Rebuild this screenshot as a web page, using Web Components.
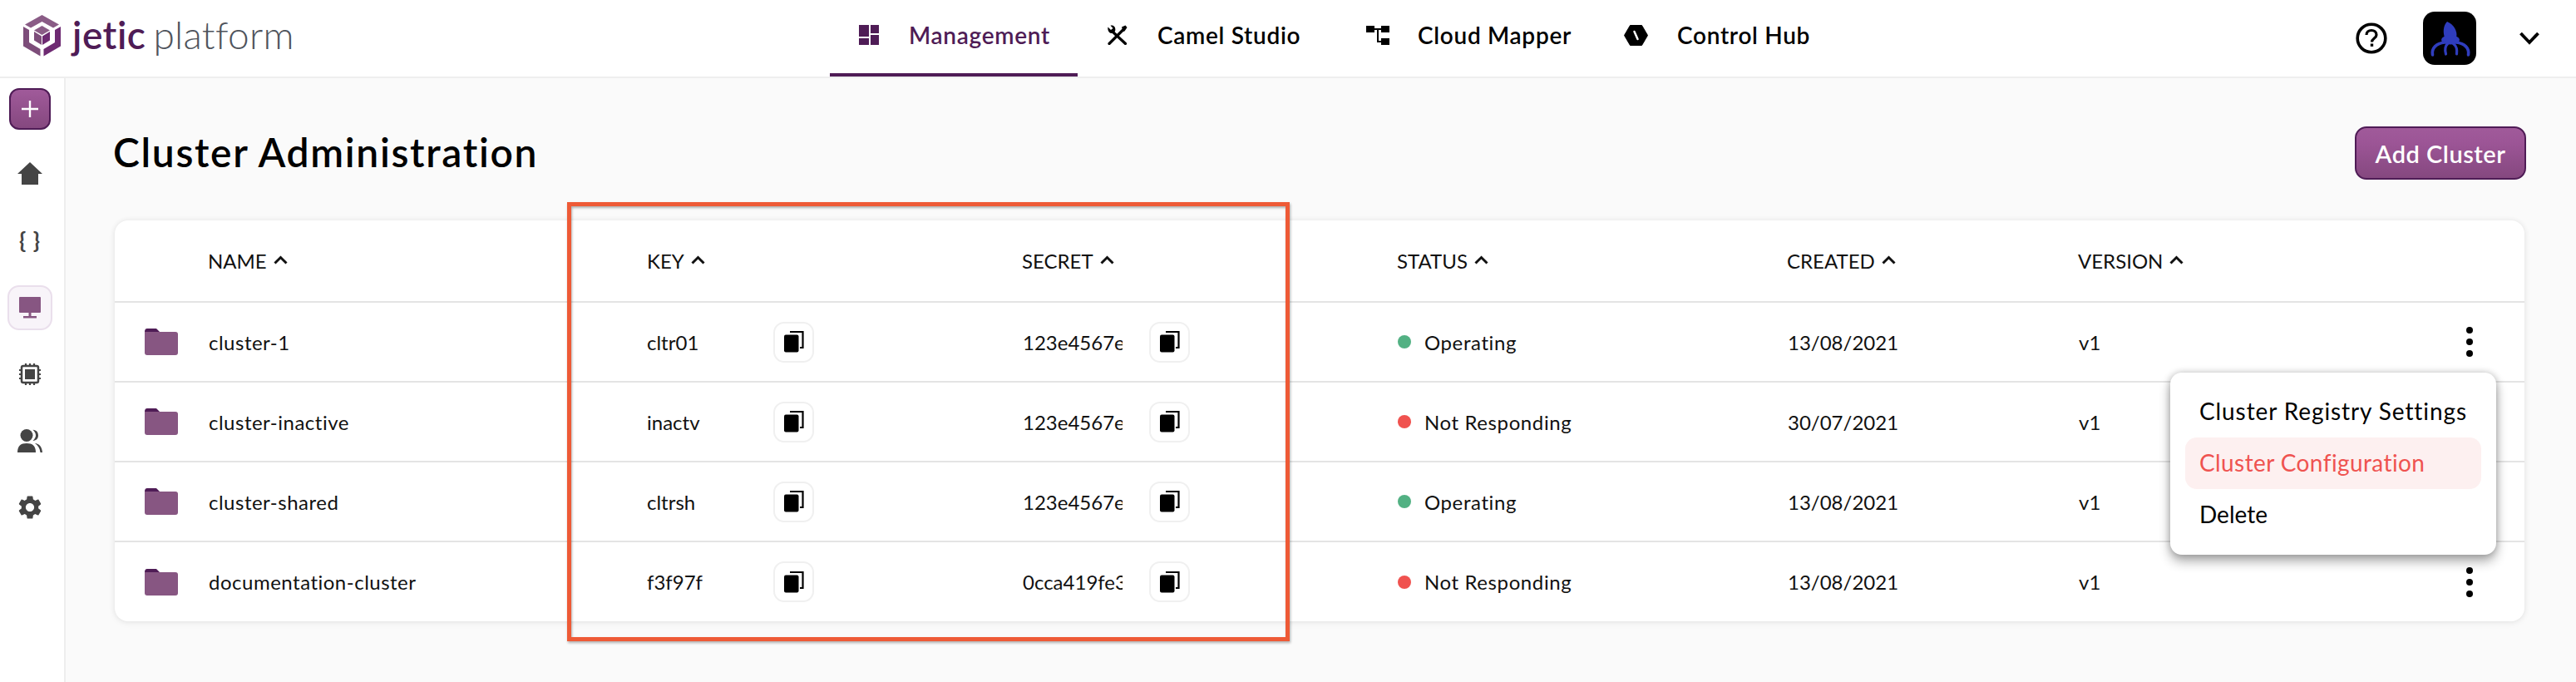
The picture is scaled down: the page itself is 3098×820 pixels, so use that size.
<!DOCTYPE html>
<html lang="en">
<head>
<meta charset="utf-8">
<title>Cluster Administration</title>
<style>
html,body{margin:0;padding:0;height:820px;overflow:hidden;background:#fafafa;font-family:Lato,"Noto Sans",sans-serif;color:#000}
</style>
</head>
<body>
<jetic-app></jetic-app>
<script>
function def(name, css, html, init){
  customElements.define(name, class extends HTMLElement{
    connectedCallback(){
      if(this.shadowRoot) return;
      const r=this.attachShadow({mode:'open'});
      const h=typeof html==='function'?html(this):html;
      r.innerHTML='<style>'+css+'</style>'+h;
      if(init) init(this,r);
    }
  });
}
const I={
 dash:'<svg width="24" height="24" viewBox="0 0 24 24" fill="currentColor"><rect width="12" height="14"/><rect x="14" width="10" height="10"/><rect y="16" width="12" height="8"/><rect x="14" y="12" width="10" height="12"/></svg>',
 tools:'<svg width="25" height="24" viewBox="0 0 25 24" fill="none" stroke="currentColor"><path d="M3 22.500L19.500 6" stroke-width="3.200" stroke-linecap="round"/><path d="M18 2.500L22.500 .5L24.500 3L21.500 7.500L19.500 8Z" fill="currentColor" stroke="none"/><path d="M8 9L22.500 22.500" stroke-width="3.200" stroke-linecap="round"/><path d="M1.500 2.500L5 6L7.500 4L4.500 .8C8 -.2 11.500 3 10 7.500L7.500 10C3.500 10.800 .5 7 1.500 2.500Z" fill="currentColor" stroke="none"/></svg>',
 map:'<svg width="28" height="24" viewBox="0 0 28 24" fill="currentColor"><rect y="1" width="10" height="8"/><rect x="18" y="1" width="10" height="8"/><rect x="18" y="16" width="10" height="8"/><path d="M10 4h8v2h-3v13h3v2h-5V6h-3z"/></svg>',
 hub:'<svg width="29" height="25" viewBox="0 0 29 25"><path d="M7.500 0.500H21.500L28.500 12.500L21.500 24.500H7.500L.5 12.500Z" fill="#000" stroke="#000" stroke-linejoin="round"/><path d="M12.500 8L16.500 17" stroke="#fff" stroke-width="2.500" stroke-linecap="round"/></svg>',
 home:'<svg width="30" height="27" viewBox="0 0 30 27" fill="#444"><path d="M15 0L30 14H25V27H5V14H0Z"/></svg>',
 monitor:'<svg width="28" height="26" viewBox="0 0 28 26" fill="#875682"><rect x="1" width="26" height="19" rx="1"/><rect x="12.500" y="19" width="3" height="4"/><rect x="6" y="23" width="16" height="2.500"/></svg>',
 chip:'<svg width="28" height="26" viewBox="0 0 28 26" fill="none" stroke="#444"><rect x="4" y="3" width="20" height="20" rx="2" stroke-width="2.500"/><rect x="8" y="7" width="12" height="12" fill="#444" stroke="none"/><path d="M9 0v3M14 0v3M19 0v3M9 23v3M14 23v3M19 23v3M1 8h3M1 13h3M1 18h3M24 8h3M24 13h3M24 18h3" stroke-width="2.200"/></svg>',
 users:'<svg width="30" height="28" viewBox="0 0 30 28" fill="#444"><circle cx="11" cy="7.500" r="7.500"/><path d="M0 28C0 20 4 17 11 17S22 20 22 28Z"/><path d="M18.500 .8C23 1 25 4 25 7.500S23 13.500 18.500 14C21 11.500 22 9.500 22 7.500S21 3 18.500 .8Z"/><path d="M21 17C26 17.500 29.500 21 30 28H27.500C27 23 24.500 19.500 21 17Z"/></svg>',
 gear:'<svg width="34" height="34" viewBox="0 0 24 24" fill="#444"><path d="M19.140 12.940c.04-.3.06-.61.06-.94 0-.32-.02-.64-.07-.94l2.030-1.580a.49.49 0 0 0 .12-.61l-1.920-3.320a.488.488 0 0 0-.59-.22l-2.390.96c-.5-.38-1.030-.7-1.620-.94l-.36-2.540a.484.484 0 0 0-.48-.41h-3.840c-.24 0-.43.17-.47.41l-.36 2.540c-.59.24-1.130.57-1.620.94l-2.390-.96c-.22-.08-.47 0-.59.22L2.740 8.870c-.12.21-.08.47.12.61l2.030 1.580c-.05.3-.09.63-.09.94s.02.64.07.94l-2.030 1.580a.49.49 0 0 0-.12.61l1.920 3.320c.12.22.37.29.59.22l2.390-.96c.5.38 1.030.7 1.620.94l.36 2.540c.05.24.24.41.48.41h3.840c.24 0 .44-.17.47-.41l.36-2.540c.59-.24 1.130-.56 1.620-.94l2.390.96c.22.08.47 0 .59-.22l1.920-3.320c.12-.22.07-.47-.12-.61l-2.010-1.580zM12 15.600c-1.980 0-3.600-1.620-3.600-3.600s1.620-3.600 3.600-3.600 3.600 1.620 3.600 3.600-1.620 3.600-3.600 3.600z"/></svg>',
 folder:'<svg width="40" height="32" viewBox="0 0 40 32"><path d="M0 4Q0 0 3 0H14L18 4Z" fill="#4f1c56"/><path d="M0 4H37Q40 4 40 7V29Q40 32 37 32H3Q0 32 0 29Z" fill="#875682"/></svg>',
 copy:'<svg width="24" height="26" viewBox="0 0 24 26" fill="none"><path d="M7 1H22.500V20H19" stroke="#000" stroke-width="2.200"/><rect y="4.500" width="17.500" height="21" rx="2" fill="#000"/></svg>',
 up:'<svg width="17" height="11" viewBox="0 0 17 11" fill="none" stroke="#111" stroke-width="3"><path d="M1.500 9.500L8.500 2.500L15.500 9.500"/></svg>'
};

def('brand-logo',`
:host{display:flex;align-items:center;gap:14px;height:92px;padding-left:28px;box-sizing:border-box}
svg{display:block;flex:none;margin-top:-6px}
.t{display:flex;gap:9px;font-size:46px;line-height:50px;margin-top:-8px;white-space:nowrap}
.j{color:#4f1c56;font-weight:600;letter-spacing:.5px}
.p{color:#4f545c;font-weight:300;letter-spacing:.3px}
`,`<svg width="45" height="50" viewBox="0 0 45 50">
<path d="M22.500 0L43 11.500L36 15.500L22.500 8L9 15.500L2 11.500Z" fill="#8a5c86"/>
<path d="M0 14L7 18V33L20.500 41V49.500L0 37.500Z" fill="#7d4d7a"/>
<path d="M45 14L38 18V33L24.500 41V49.500L45 37.500Z" fill="#6e2a72"/>
<path d="M22.500 13L32 18.500L22.500 24L13 18.500Z" fill="#8a5c86"/>
<path d="M13 20L22 25.500V36L13 30.500Z" fill="#7d4d7a"/>
<path d="M32 20L23 25.500V36L32 30.500Z" fill="#6e2a72"/></svg>
<div class="t"><span class="j">jetic</span><span class="p">platform</span></div>`);

def('nav-tab',`
:host{display:block;height:92px;box-sizing:border-box;padding-bottom:8px;color:#000}
:host([active]){color:#4f1c56;border-bottom:4px solid #4f1c56;padding-bottom:4px}
.r{height:100%;display:grid;grid-template-columns:var(--ic,60px) 1fr;align-items:center;padding-left:35px;font-size:28px;font-weight:600;letter-spacing:.7px;white-space:nowrap}
.i{display:flex;align-items:center}
svg{display:block}
`,t=>`<div class="r" style="--ic:${t.getAttribute('ic')}px"><span class="i">${I[t.getAttribute('icon')]}</span><span><slot></slot></span></div>`);

def('top-bar',`
:host{display:grid;grid-template-columns:998px 1220px 1fr;height:94px;box-sizing:border-box;background:#fff;border-bottom:2px solid #eee}
nav{display:grid;grid-template-columns:298px 312px 310px 300px}
.u{display:flex;align-items:center;justify-content:flex-end;padding-right:44px;height:92px}
.a{width:64px;height:64px;border-radius:14px;background:#000;margin:0 52px 0 43px;overflow:hidden;display:block}
svg{display:block;flex:none}
`,`<brand-logo></brand-logo>
<nav>
<nav-tab active icon="dash" ic="60">Management</nav-tab>
<nav-tab icon="tools" ic="61">Camel Studio</nav-tab>
<nav-tab icon="map" ic="62">Cloud Mapper</nav-tab>
<nav-tab icon="hub" ic="64">Control Hub</nav-tab>
</nav>
<div class="u">
<svg width="38" height="38" viewBox="0 0 38 38" fill="none" stroke="#000"><circle cx="19" cy="19" r="16.800" stroke-width="3.600"/><path d="M13 15C13 11.500 15.500 9.500 19 9.500S25 11.500 25 15C25 19 19.500 19 19.500 23.500" stroke-width="3.200"/><rect x="17.800" y="25.500" width="3.400" height="3.400" fill="#000" stroke="none"/></svg>
<svg class="a" viewBox="0 0 64 64" fill="none" stroke="#2f3dbd"><path d="M29 12C24 17 24 25 26 31H40C42 24 37 15 29 12Z" fill="#2f3dbd" stroke="none"/><ellipse cx="33" cy="34" rx="11" ry="5.500" fill="#2f3dbd" stroke="none"/><path d="M26 37C16 38 10 44 11.500 52" stroke-width="3.600" stroke-linecap="round"/><path d="M40 37C50 38 56 44 54.500 52" stroke-width="3.600" stroke-linecap="round"/><path d="M30 38C26 42 26 46 27.500 51" stroke-width="3.200" stroke-linecap="round"/><path d="M36 38C41 42 41 46 40.500 51" stroke-width="3.200" stroke-linecap="round"/></svg>
<svg width="24" height="16" viewBox="0 0 24 16" fill="none" stroke="#000" stroke-width="3.800"><path d="M1.500 2L12 13L22.500 2"/></svg>
</div>`);

def('side-btn',`
:host{display:flex;align-items:center;justify-content:center;width:72px;height:80px;color:#444}
.b{display:flex;align-items:center;justify-content:center;width:54px;height:54px;box-sizing:border-box;border-radius:14px;font-size:27px;font-weight:700;letter-spacing:1px}
:host(:not([icon])) .b{padding-bottom:4px}
:host([active]) .b{background:#f8f4f9;border:2px solid #eadfec}
svg{display:block}
`,t=>`<div class="b">${t.hasAttribute('icon')?I[t.getAttribute('icon')]:'<slot></slot>'}</div>`);

def('side-bar',`
:host{display:block;width:79px;box-sizing:border-box;background:#fff;border-right:2px solid #eee;height:726px;padding-top:12px}
.p{width:50px;height:50px;margin:0 0 12px 11px;box-sizing:border-box;border:2px solid #4f1c56;border-radius:12px;background:linear-gradient(#a05a9a,#85487f);display:flex;align-items:center;justify-content:center}
svg{display:block}
side-btn[icon=home]{margin-bottom:2px}
`,`<div class="p"><svg width="20" height="20" viewBox="0 0 20 20" stroke="#fff" stroke-width="2.400"><path d="M10 0V20M0 10H20"/></svg></div>
<side-btn icon="home"></side-btn>
<side-btn>{ }</side-btn>
<side-btn icon="monitor" active></side-btn>
<side-btn icon="chip"></side-btn>
<side-btn icon="users"></side-btn>
<side-btn icon="gear"></side-btn>`);

def('primary-button',`
:host{display:flex;align-items:center;justify-content:center;width:206px;height:64px;box-sizing:border-box;border:2px solid #4f1c56;border-radius:14px;background:linear-gradient(#a05a9a 0,#9c5596 30%,#85487f 100%);color:#fff;font-size:29px;font-weight:600;letter-spacing:.5px;white-space:nowrap}
`,`<slot></slot>`);

def('sort-head',`
:host{display:flex;align-items:center;gap:8px;font-size:24px;color:#111;white-space:nowrap;margin-left:-1px}
svg{display:block;margin-top:-2px}
`,`<slot></slot>${I.up}`);

def('copy-button',`
:host{display:flex;align-items:center;justify-content:center;width:49px;height:49px;box-sizing:border-box;border:2px solid #f0f0f0;border-radius:13px;background:#fff;flex:none}
svg{display:block}
`,I.copy);

def('status-dot',`
:host{display:flex;align-items:center;gap:16px;white-space:nowrap;letter-spacing:.6px}
i{width:16px;height:16px;border-radius:50%;background:var(--c);flex:none}
`,t=>`<i style="--c:${t.getAttribute('state')==='ok'?'#52b183':'#f0524f'}"></i><slot></slot>`);

def('kebab-button',`
:host{display:flex;flex-direction:column;align-items:center;gap:6px;width:8px}
i{width:8px;height:8px;border-radius:50%;background:#000;display:block}
`,`<i></i><i></i><i></i>`);

const COLS='113px 528px 451px 451px 469px 350px 400px 136px';
def('cluster-head',`
:host{display:grid;grid-template-columns:${COLS};align-items:center;height:99px;box-sizing:border-box;border-bottom:2px solid #e4e4e4}
`,`<span></span><sort-head>NAME</sort-head><sort-head>KEY</sort-head><sort-head>SECRET</sort-head><sort-head>STATUS</sort-head><sort-head>CREATED</sort-head><sort-head>VERSION</sort-head>`);

def('cluster-row',`
:host{display:grid;grid-template-columns:${COLS};align-items:center;height:96px;box-sizing:border-box;border-bottom:2px solid #e4e4e4;font-size:24px;color:#111;white-space:nowrap}
:host([last]){border-bottom:0;height:95px}
.f{padding-left:36px;display:flex}
svg{display:block}
.n{letter-spacing:.5px}
.k{display:flex;align-items:center}
.kt{width:152px;margin-left:-1px;overflow:hidden}
.st{width:120px;margin-right:32px;overflow:hidden}
.m{display:flex;justify-content:flex-end;padding-right:62px}
`,t=>{const a=n=>t.getAttribute(n);return `<div class="f">${I.folder}</div><div class="n">${a('name')}</div>
<div class="k"><span class="kt">${a('key')}</span><copy-button></copy-button></div>
<div class="k"><span class="st">${a('secret')}</span><copy-button></copy-button></div>
<status-dot state="${a('state')}">${a('status')}</status-dot><div>${a('created')}</div><div>${a('version')}</div>
<div class="m"><kebab-button></kebab-button></div>`});

def('cluster-table',`
:host{display:block;width:2898px;height:482px;background:#fff;border-radius:16px;box-shadow:0 0 6px rgba(0,0,0,.07),0 2px 10px rgba(0,0,0,.05);overflow:hidden}
`,`<cluster-head></cluster-head>
<cluster-row name="cluster-1" key="cltr01" secret="123e4567e89b12d3" state="ok" status="Operating" created="13/08/2021" version="v1"></cluster-row>
<cluster-row name="cluster-inactive" key="inactv" secret="123e4567e89b12d3" state="bad" status="Not Responding" created="30/07/2021" version="v1"></cluster-row>
<cluster-row name="cluster-shared" key="cltrsh" secret="123e4567e89b12d3" state="ok" status="Operating" created="13/08/2021" version="v1"></cluster-row>
<cluster-row last name="documentation-cluster" key="f3f97f" secret="0cca419fe3a1b7c2" state="bad" status="Not Responding" created="13/08/2021" version="v1"></cluster-row>`);

def('context-menu',`
:host{position:absolute;left:2610px;top:448px;width:392px;height:219px;box-sizing:border-box;padding:16px 18px;background:#fff;border-radius:14px;box-shadow:0 8px 14px rgba(0,0,0,.32),0 0 8px rgba(0,0,0,.22);font-size:28px;color:#000}
div{height:62px;line-height:60px;padding-left:17px;border-radius:14px;white-space:nowrap}
.h{background:#fdf0f0;color:#ef5350;letter-spacing:.4px}
.a{letter-spacing:.9px}
`,`<div class="a">Cluster Registry Settings</div><div class="h">Cluster Configuration</div><div>Delete</div>`);

def('highlight-box',`
:host{position:absolute;left:682px;top:243px;width:869px;height:528px;box-sizing:border-box;border:5px solid #ee5a36;box-shadow:1px 2px 3px rgba(0,0,0,.3),inset 1px 2px 3px rgba(0,0,0,.3);pointer-events:none}
`,``);

def('jetic-app',`
:host{display:block;position:relative;width:3098px;height:820px;overflow:hidden}
.b{display:grid;grid-template-columns:79px 1fr}
main{padding:58px 60px 0 59px;height:668px}
.t{display:flex;justify-content:space-between;align-items:center;height:64px;margin-bottom:49px}
h1{margin:-3px 0 0 -2px;font-size:48px;font-weight:600;letter-spacing:1.65px;color:#000;white-space:nowrap}
`,`<top-bar></top-bar>
<div class="b"><side-bar></side-bar>
<main><div class="t"><h1>Cluster Administration</h1><primary-button>Add Cluster</primary-button></div>
<cluster-table></cluster-table></main></div>
<context-menu></context-menu>
<highlight-box></highlight-box>`);
</script>
</body>
</html>
